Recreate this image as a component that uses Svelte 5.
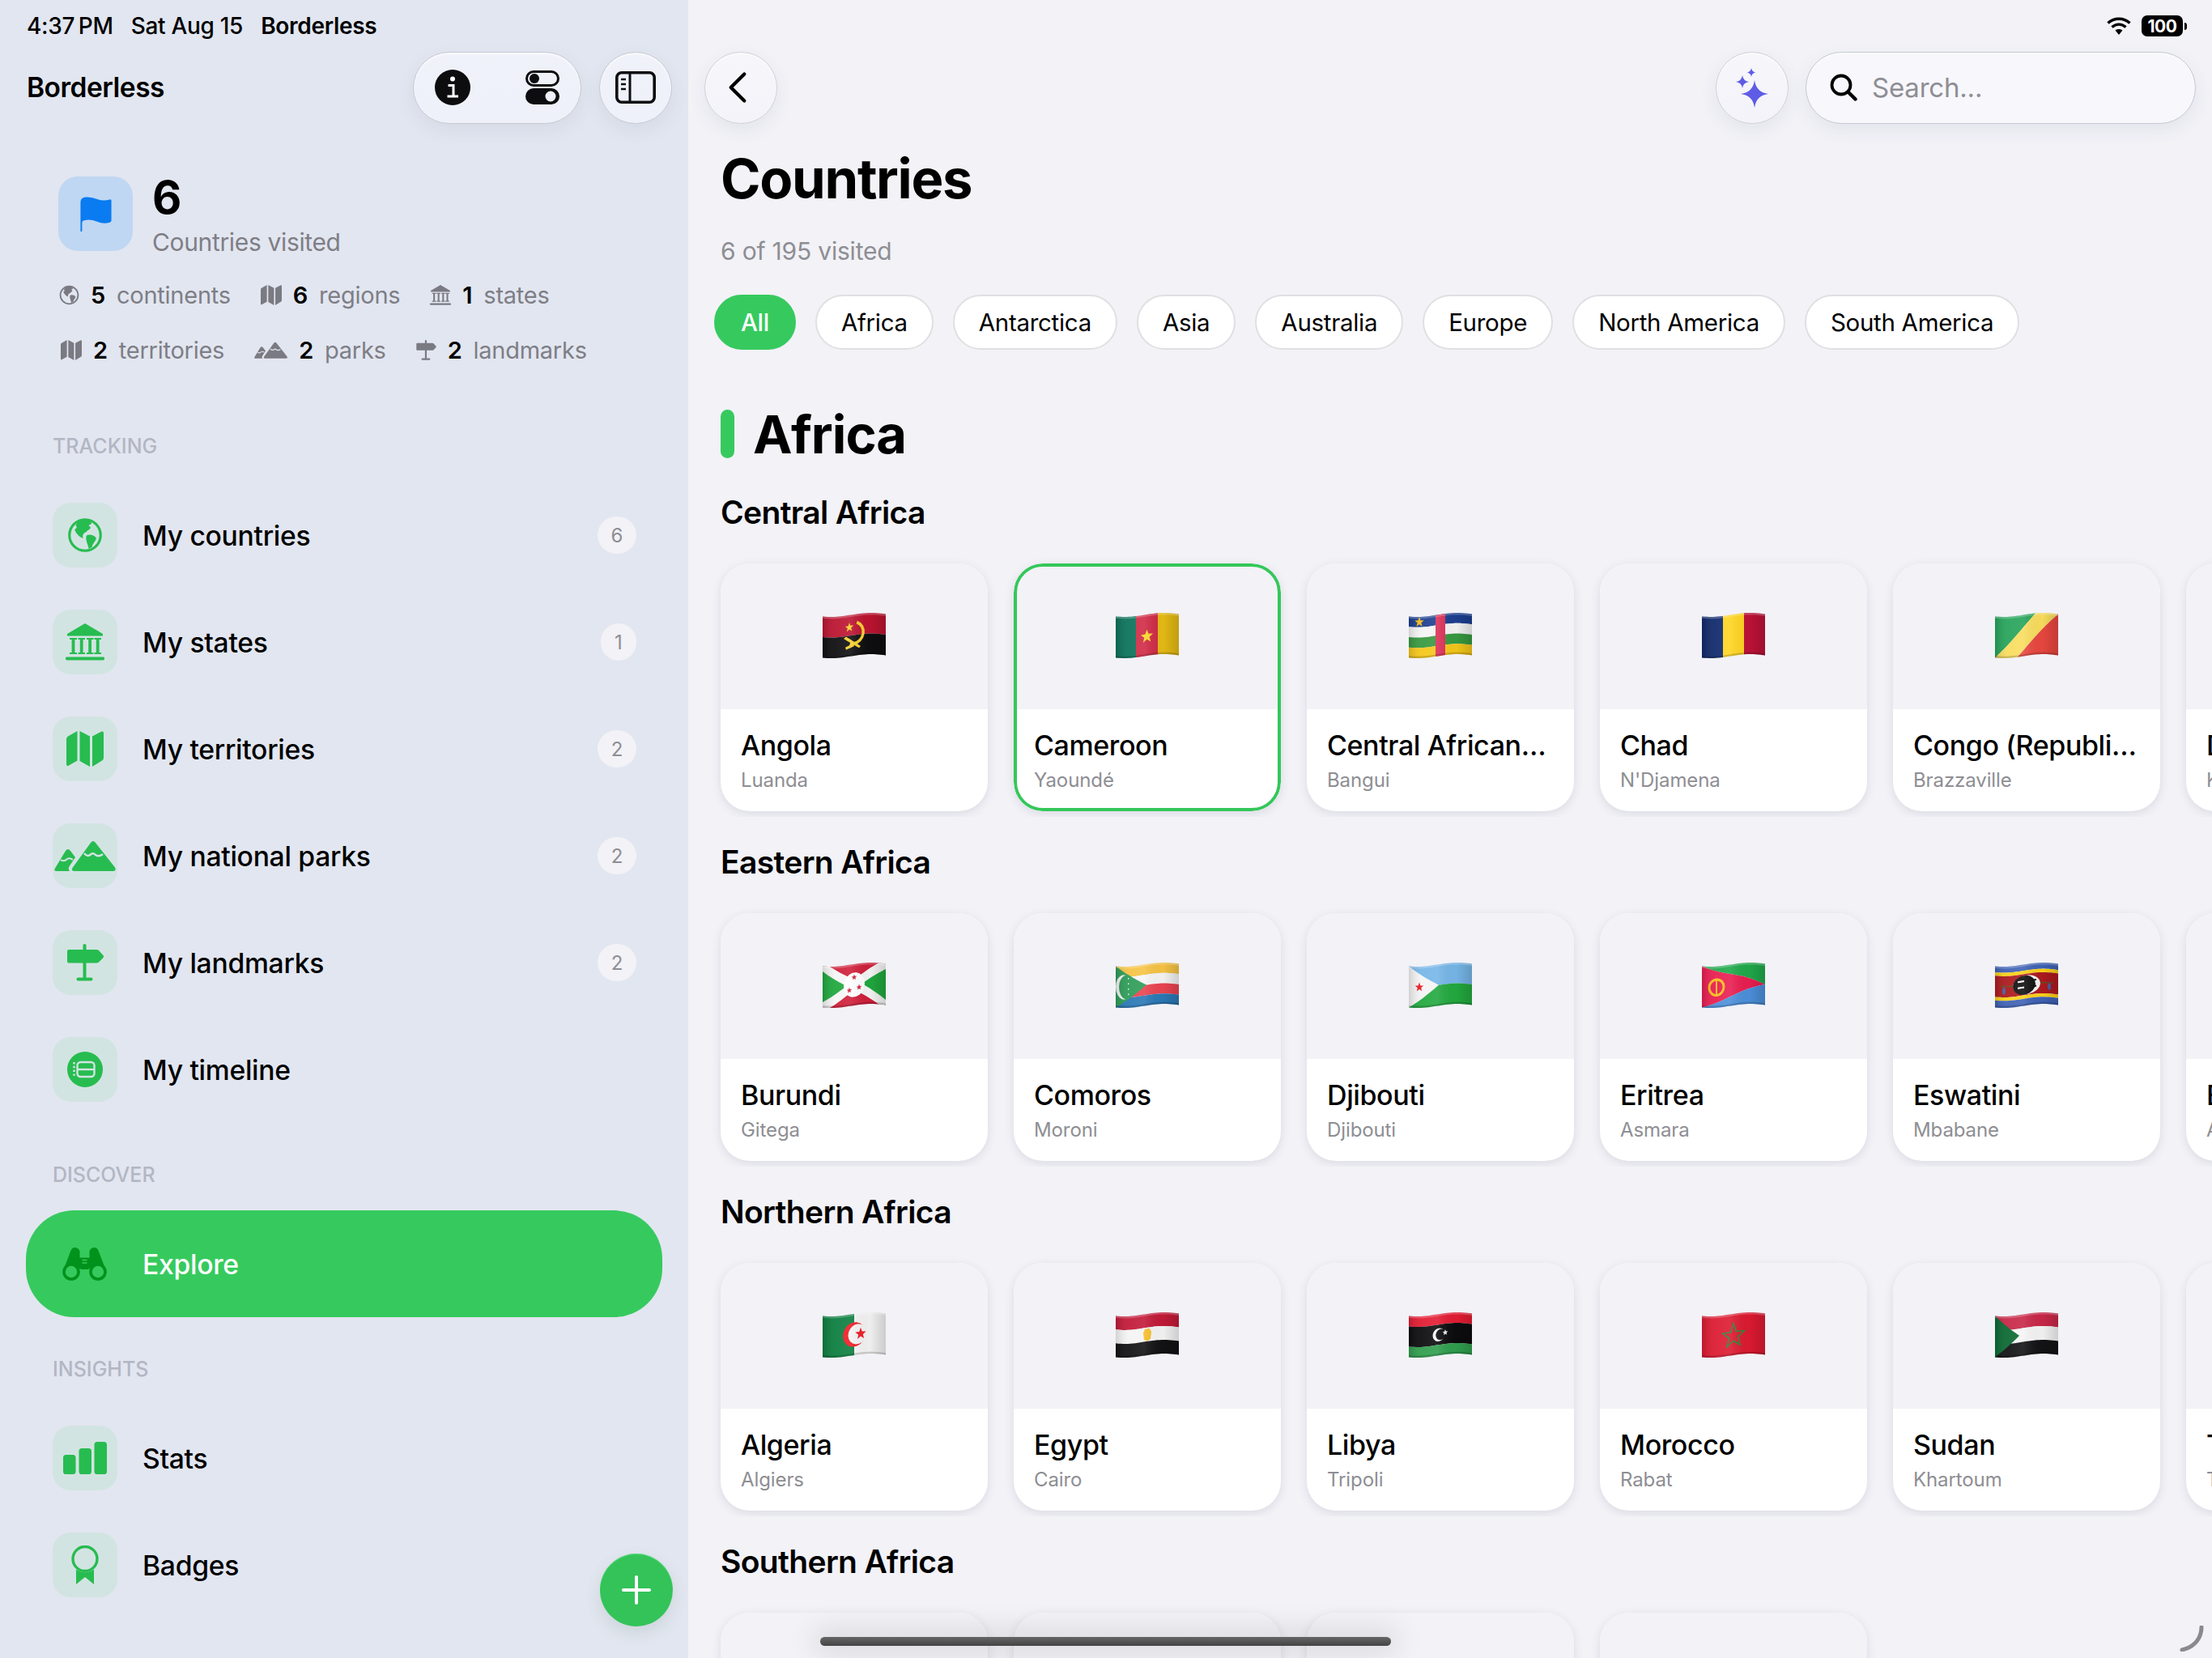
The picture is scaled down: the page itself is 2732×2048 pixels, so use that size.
<script>
  const H = 47;
  const SY = 51 / 47;
  const off = (x) => 2.5 + 2.5 * Math.cos(2 * Math.PI * 0.8 * (x / 78 - 0.14));
  function warp(pts) {
    let d = '';
    for (let i = 0; i < pts.length; i++) {
      const [x0, y0] = pts[i];
      const [x1, y1] = pts[(i + 1) % pts.length];
      const n = Math.max(1, Math.ceil(Math.hypot(x1 - x0, y1 - y0) / 3));
      for (let k = 0; k < n; k++) {
        const x = x0 + ((x1 - x0) * k) / n;
        const y = y0 + ((y1 - y0) * k) / n;
        d += (d ? 'L' : 'M') + x.toFixed(2) + ' ' + (y * SY + off(x)).toFixed(2);
      }
    }
    return d + 'Z';
  }
  const rect = (x, y, w, h) => [[x, y], [x + w, y], [x + w, y + h], [x, y + h]];
  const circ = (cx, cy, r, ry = r, a0 = 0, a1 = 360) => {
    const p = [];
    for (let a = a0; a <= a1; a += 20) p.push([cx + r * Math.cos((a * Math.PI) / 180), cy + ry * Math.sin((a * Math.PI) / 180)]);
    return p;
  };
  const star = (cx, cy, R, r = R * 0.42) => {
    const p = [];
    for (let i = 0; i < 10; i++) {
      const a = -Math.PI / 2 + (i * Math.PI) / 5;
      const q = i % 2 ? r : R;
      p.push([cx + q * Math.cos(a), cy + q * Math.sin(a)]);
    }
    return p;
  };
  const bands = (cols, stops) => cols.map((c, i) => [c, rect(0, stops[i], 78, stops[i + 1] - stops[i])]);
  const vbands = (cols, stops) => cols.map((c, i) => [c, rect(stops[i], 0, stops[i + 1] - stops[i], H)]);
  const ring = (cx, cy, R, r, a0, a1) => [...circ(cx, cy, R, R, a0, a1), ...circ(cx, cy, r, r, a0, a1).reverse()];

  const art = {
    angola: [
      ...bands(['#bb1430', '#0e0e10'], [0, 23.5, H]),
      ['#f7cf2e', ring(38, 21, 14, 10.5, -70, 110)],
      ['#f7cf2e', star(33, 14, 5.5)],
      ['#f7cf2e', [[26, 26], [29, 24], [47, 37], [45, 39]]],
      ['#f7cf2e', [[28, 36], [38, 33], [39, 36], [29, 39]]]
    ],
    cameroon: [...vbands(['#0b735a', '#d02a45', '#e6bb15'], [0, 25, 52, 78]), ['#fbd92c', star(38.5, 25, 8)]],
    car: [
      ...bands(['#1c3f8f', '#f4f4f4', '#37993f', '#f5c71a'], [0, 11.75, 23.5, 35.25, H]),
      ['#dc3058', rect(33, 0, 12, H)],
      ['#f5b91a', star(13, 6, 6)]
    ],
    chad: vbands(['#10296b', '#fed420', '#bd1238'], [0, 26, 52, 78]),
    congo: [
      ['#27a45b', [[0, 0], [50, 0], [0, 47]]],
      ['#f9dd5e', [[50, 0], [78, 0], [28, 47], [0, 47]]],
      ['#e8473f', [[78, 0], [78, 47], [28, 47]]]
    ],
    burundi: [
      ['#cf1f3a', rect(0, 0, 78, H)],
      ['#20a83e', [[0, 0], [39, 23.5], [0, 47]]],
      ['#20a83e', [[78, 0], [39, 23.5], [78, 47]]],
      ['#f5f5f5', [[0, 0], [9, 0], [78, 41], [78, 47], [69, 47], [0, 6]]],
      ['#f5f5f5', [[69, 0], [78, 0], [78, 6], [9, 47], [0, 47], [0, 41]]],
      ['#ffffff', circ(39, 23.5, 13, 14)],
      ['#cf1f3a', star(39, 15, 3.5)],
      ['#cf1f3a', star(33, 29, 3.5)],
      ['#cf1f3a', star(45, 27, 3.5)]
    ],
    comoros: [
      ...bands(['#f6c344', '#f5f5f5', '#ea4450', '#2a78b5'], [0, 11.75, 23.5, 35.25, H]),
      ['#2e9d58', [[0, 0], [38, 23.5], [0, 47]]],
      ['#f5f5f5', circ(10, 23.5, 10, 14)],
      ['#2e9d58', circ(14, 23.5, 10, 14)],
      ['#f5f5f5', rect(15, 13, 1.4, 1.4)],
      ['#f5f5f5', rect(15, 19, 1.4, 1.4)],
      ['#f5f5f5', rect(15, 25, 1.4, 1.4)],
      ['#f5f5f5', rect(15, 31, 1.4, 1.4)]
    ],
    djibouti: [
      ...bands(['#76b6e8', '#22a93f'], [0, 23.5, H]),
      ['#f4f4f4', [[0, 0], [37, 23.5], [0, 47]]],
      ['#ea1c24', star(13, 23.5, 5.5)]
    ],
    eritrea: [
      ['#1fa84a', [[0, 0], [78, 0], [78, 23.5]]],
      ['#e91e50', [[0, 0], [78, 23.5], [0, 47]]],
      ['#4b8fda', [[0, 47], [78, 23.5], [78, 47]]],
      ['#f5bb1e', ring(18, 24, 10.5, 7.5, 0, 360)],
      ['#f5bb1e', rect(17, 14, 2, 20)]
    ],
    eswatini: [
      ...bands(['#3f62b5', '#fbd117', '#ad1a1e', '#fbd117', '#3f62b5'], [0, 7, 11, 35, 39, H]),
      ['#6e4a22', rect(6, 22, 66, 1.4)],
      ['#4a5fa8', circ(11, 28, 2, 4)],
      ['#4a5fa8', circ(67, 27, 2, 4)],
      ['#f5f5f5', circ(39, 23.5, 17, 11)],
      ['#111111', circ(36, 23.5, 14, 11)],
      ['#f5f5f5', rect(28, 18, 8, 2)],
      ['#f5f5f5', rect(28, 25, 8, 2)],
      ['#111111', rect(44, 18, 7, 2)],
      ['#111111', rect(44, 25, 7, 2)]
    ],
    algeria: [
      ...vbands(['#0b7e3f', '#f3f3f3'], [0, 39, 78]),
      ['#ee1c25', circ(39, 23.5, 14)],
      ['#f3f3f3', circ(43, 23.5, 11.5)],
      ['#ee1c25', star(47, 23.5, 7)]
    ],
    egypt: [
      ...bands(['#c21a38', '#f4f4f4', '#121214'], [0, 15.6, 31.3, H]),
      ['#f7be2c', [[36, 17], [42, 17], [44, 21], [43, 29], [39, 31], [35, 29], [34, 21]]]
    ],
    libya: [
      ...bands(['#e31c32', '#0c0c0e', '#2f9e4d'], [0, 12, 35, H]),
      ['#f5f5f5', circ(37, 23.5, 7.5)],
      ['#0c0c0e', circ(39.5, 23.5, 6.2)],
      ['#f5f5f5', star(45, 22, 3.6)]
    ],
    morocco: [
      ['#dc1a30', rect(0, 0, 78, H)],
      ['#0f9a36', star(39, 25, 16, 6.5)],
      ['#dc1a30', star(39, 25, 12.5, 4.8)]
    ],
    sudan: [
      ...bands(['#c82848', '#f4f4f4', '#131315'], [0, 15.6, 31.3, H]),
      ['#0b6a33', [[0, 0], [30, 23.5], [0, 47]]]
    ]
  };
  const flags = Object.fromEntries(
    Object.entries(art).map(([k, v]) => [k, v.map(([c, p]) => ({ c, d: warp(p) }))])
  );
  const whole = warp(rect(0, 0, 78, H));
  const topEdge = warp(rect(0, 0, 78, 2.2));
  const botEdge = warp(rect(0, H - 2.2, 78, 2.2));

  const sections = [
    { title: 'Central Africa', items: [
      ['angola', 'Angola', 'Luanda'],
      ['cameroon', 'Cameroon', 'Yaoundé', true],
      ['car', 'Central African Republic', 'Bangui'],
      ['chad', 'Chad', "N'Djamena"],
      ['congo', 'Congo (Republic of the)', 'Brazzaville'],
      [null, 'DR Congo', 'Kinshasa']
    ]},
    { title: 'Eastern Africa', items: [
      ['burundi', 'Burundi', 'Gitega'],
      ['comoros', 'Comoros', 'Moroni'],
      ['djibouti', 'Djibouti', 'Djibouti'],
      ['eritrea', 'Eritrea', 'Asmara'],
      ['eswatini', 'Eswatini', 'Mbabane'],
      [null, 'Ethiopia', 'Addis Ababa']
    ]},
    { title: 'Northern Africa', items: [
      ['algeria', 'Algeria', 'Algiers'],
      ['egypt', 'Egypt', 'Cairo'],
      ['libya', 'Libya', 'Tripoli'],
      ['morocco', 'Morocco', 'Rabat'],
      ['sudan', 'Sudan', 'Khartoum'],
      [null, 'Tunisia', 'Tunis']
    ]},
    { title: 'Southern Africa', items: [
      [null, 'Botswana', 'Gaborone'],
      [null, 'Lesotho', 'Maseru'],
      [null, 'Namibia', 'Windhoek'],
      [null, 'South Africa', 'Pretoria']
    ]}
  ];
  const chips = ['All', 'Africa', 'Antarctica', 'Asia', 'Australia', 'Europe', 'North America', 'South America'];
  const tracking = [
    ['globe', 'My countries', 6],
    ['bank', 'My states', 1],
    ['map', 'My territories', 2],
    ['mountains', 'My national parks', 2],
    ['sign', 'My landmarks', 2],
    ['timeline', 'My timeline', null]
  ];
  const row1 = [['globe', 5, 'continents'], ['map', 6, 'regions'], ['bank', 1, 'states']];
  const row2 = [['map', 2, 'territories'], ['mountains', 2, 'parks'], ['sign', 2, 'landmarks']];
</script>

{#snippet icon(name)}
  {#if name === 'globe'}
    <svg class="ic globe" viewBox="0 0 48 48">
      <circle cx="24" cy="24" r="21" fill="none" stroke="currentColor" stroke-width="3.4" />
      <path fill="currentColor" d="M14 6.5C19 3.6 26 3 31 4.6L33 8.5 29 11 31.5 13.5C31 17 27 16.5 26 19.5 22 20.5 20 24 21.5 28 17 27 12 22 10 16.5L13 14 11.5 10.5Z" />
      <path fill="currentColor" d="M26 24.5C30 22 36 24 39 27.5 39 32 34 35 33.5 40L29 42.5C28 36 24 30 26 24.5Z" />
    </svg>
  {:else if name === 'bank'}
    <svg class="ic bank" viewBox="0 0 48 46">
      <path fill="currentColor" d="M24 0 46 13V15.5H2V13Z" />
      <path fill="currentColor" d="M5 18H14V20H11.4V36H14V38H5V36H7.6V20H5ZM15.5 18H24V20H21.6V36H24V38H15.5V36H17.8V20H15.5ZM26 18H34.5V20H32V36H34.5V38H26V36H28.2V20H26ZM35.5 18H44V20H41.6V36H44V38H35.5V36H37.8V20H35.5Z" />
      <rect x="0" y="41.5" width="48" height="4" rx="1.4" fill="currentColor" />
    </svg>
  {:else if name === 'map'}
    <svg class="ic map" viewBox="0 0 46 44">
      <path fill="currentColor" d="M0 10Q0 7.5 2 6.5L13.5 0V36.500L3 42.500Q0 44 0 41Z" />
      <path fill="currentColor" d="M16.500 0 29 6.500V44L16.500 37Z" />
      <path fill="currentColor" d="M32 6.500 43 .8Q46-.5 46 2.500V33Q46 35.500 44 36.500L32 44Z" />
    </svg>
  {:else if name === 'mountains'}
    <svg class="ic mountains" viewBox="0 0 76 38">
      <path fill="currentColor" d="M3 38Q-1 38 1 34.500L14 13Q17 9 20 13L26 21 20 30Q16 35 19 38Z" />
      <path fill="currentColor" d="M25 38Q20.500 38 22.500 34L45 3Q48-1 51 3L75 33.500Q77 38 73 38Z" />
      <path fill="none" stroke="var(--cut)" stroke-width="2.4" d="M37 16Q41 21 45 17.500 48 15 51 18 55 21 60 17" />
      <path fill="none" stroke="var(--cut)" stroke-width="2" d="M8 24Q12 27 16 23 19 21 23 24" />
    </svg>
  {:else if name === 'sign'}
    <svg class="ic sign" viewBox="0 0 45 46">
      <path fill="currentColor" d="M0 9Q0 7 2 7H19.500V1.500Q19.500 0 21.500 0 23.500 0 23.500 1.500V7H36Q38 7 39 8L44.500 14Q45.500 15.500 44.500 17L39 22.500Q38 23.500 36 23.500H23.500V41.500H29.500Q31.500 41.500 31.500 43.500 31.500 45.500 29.500 45.500H13.500Q11.500 45.500 11.500 43.500 11.500 41.500 13.500 41.500H19.500V23.500H2Q0 23.500 0 21.500Z" />
    </svg>
  {:else if name === 'timeline'}
    <svg class="ic timeline" viewBox="0 0 44 44">
      <circle cx="22" cy="22" r="22" fill="currentColor" />
      <rect x="12.500" y="13" width="21" height="18" rx="4" fill="none" stroke="var(--cut)" stroke-width="2.4" />
      <path stroke="var(--cut)" stroke-width="2.400" d="M12.500 22H33.500" />
      <path stroke="var(--cut)" stroke-width="2.400" stroke-dasharray="2.400 2.400" d="M8.500 13V31" />
    </svg>
  {:else if name === 'chart'}
    <svg class="ic chart" viewBox="0 0 54 40">
      <rect x="0" y="16" width="15.500" height="24" rx="3.600" fill="currentColor" />
      <rect x="19.500" y="8" width="15.500" height="32" rx="3.600" fill="currentColor" />
      <rect x="38.500" y="0" width="15.500" height="40" rx="3.600" fill="currentColor" />
    </svg>
  {:else if name === 'rosette'}
    <svg class="ic rosette" viewBox="0 0 34 48">
      <ellipse cx="17" cy="16.500" rx="15" ry="15" fill="none" stroke="currentColor" stroke-width="3.400" />
      <path fill="currentColor" d="M6 29.500Q17 37 28 29.500V48L17 39 6 48Z" />
    </svg>
  {:else if name === 'binoculars'}
    <svg class="ic binoculars" viewBox="0 0 55 41">
      <path fill="currentColor" d="M2 26 10 5Q11.500 0 15.500 0 20 0 21.500 4.500V12.500H33.500V4.500Q35 0 39.500 0 43.500 0 45 5L53 26 44 21 36 25 31 27H24L19 25 11 21Z" />
      <circle cx="11" cy="30" r="9" fill="#36ca5e" stroke="currentColor" stroke-width="3.600" />
      <circle cx="44" cy="30" r="9" fill="#36ca5e" stroke="currentColor" stroke-width="3.600" />
      <path d="M24.500 15.500H30.500M24.500 19H30.500" stroke="#36ca5e" stroke-width="1.500" />
    </svg>
  {/if}
{/snippet}

{#snippet flag(key)}
  <svg class="flag" viewBox="0 0 78 56" aria-hidden="true">
    {#each flags[key] as s}<path d={s.d} fill={s.c} />{/each}
    <path d={whole} fill="url(#flagShade)" />
    <path d={topEdge} fill="#fff" opacity=".22" />
    <path d={botEdge} fill="#000" opacity=".16" />
  </svg>
{/snippet}

{#snippet stat(s)}
  <div class="stat">
    <span class="stat-ic">{@render icon(s[0])}</span>
    <b>{s[1]}</b>
    <span>{s[2]}</span>
  </div>
{/snippet}

{#snippet navrow(n)}
  <div class="nav-row">
    <div class="tile">{@render icon(n[0])}</div>
    <div class="nav-label">{n[1]}</div>
    {#if n[2] !== null && n[2] !== undefined}<div class="count" class:narrow={n[2] === 1}>{n[2]}</div>{/if}
  </div>
{/snippet}

<svg class="defs" width="0" height="0" aria-hidden="true">
  <defs>
    <linearGradient id="flagShade" x1="0" x2="1" y1="0" y2="0">
      <stop offset="0" stop-color="#000" stop-opacity=".14" />
      <stop offset=".2" stop-color="#fff" stop-opacity=".06" />
      <stop offset=".45" stop-color="#fff" stop-opacity=".1" />
      <stop offset=".75" stop-color="#000" stop-opacity=".02" />
      <stop offset="1" stop-color="#000" stop-opacity=".16" />
    </linearGradient>
  </defs>
</svg>

<div class="app">
  <aside class="side">
    <div class="status">
      <span>4:37&#8201;PM</span><span>Sat Aug 15</span><b>Borderless</b>
    </div>

    <header class="side-head">
      <div class="app-name">Borderless</div>
      <div class="glass group">
        <svg class="info" viewBox="0 0 44 44">
          <circle cx="22" cy="22" r="22" fill="#0d0d10" />
          <circle cx="22" cy="11.500" r="3" fill="#fff" />
          <path fill="none" stroke="#fff" stroke-width="3" d="M16.500 19.500H23V33M15.500 33H29" />
        </svg>
        <svg class="toggles" viewBox="0 0 42 42">
          <rect x="1.500" y="1.500" width="39" height="17" rx="8.500" fill="none" stroke="#0d0d10" stroke-width="3" />
          <circle cx="11" cy="10" r="6" fill="#0d0d10" />
          <rect x="0" y="22" width="42" height="20" rx="10" fill="#0d0d10" />
          <circle cx="31" cy="32" r="6.500" fill="#eef1f9" />
        </svg>
      </div>
      <div class="glass round">
        <svg class="panel" viewBox="0 0 50 40">
          <rect x="1.800" y="1.800" width="46.400" height="36.400" rx="6" fill="none" stroke="#0d0d10" stroke-width="3.600" />
          <path stroke="#0d0d10" stroke-width="3" d="M18 2V38" />
          <path stroke="#0d0d10" stroke-width="2.400" d="M7 10H13M7 16H13M7 22H13" />
        </svg>
      </div>
    </header>

    <section class="summary">
      <div class="sum-top">
        <div class="flag-tile">
          <svg viewBox="0 0 40 44">
            <path fill="#0a7bf0" d="M1 44V7Q1 1 8 .5 15 0 22 3 30 6 38 3.500 40 3 40 5V30Q40 32 38 32.500 30 35 22 31.500 13 28 6 30 3 30.500 3 33V43Q3 44 2 44Z" />
          </svg>
        </div>
        <div class="sum-text">
          <div class="big">6</div>
          <div class="cap">Countries visited</div>
        </div>
      </div>
      <div class="stats first">{#each row1 as s}{@render stat(s)}{/each}</div>
      <div class="stats second">{#each row2 as s}{@render stat(s)}{/each}</div>
    </section>

    <div class="label tracking">TRACKING</div>
    <nav class="nav">{#each tracking as n}{@render navrow(n)}{/each}</nav>

    <div class="label">DISCOVER</div>
    <div class="explore">
      <div class="explore-ic">{@render icon('binoculars')}</div>
      <div class="explore-label">Explore</div>
    </div>

    <div class="label">INSIGHTS</div>
    <nav class="nav">
      {@render navrow(['chart', 'Stats', null])}
      {@render navrow(['rosette', 'Badges', null])}
    </nav>

    <button class="fab" aria-label="Add">
      <svg viewBox="0 0 36 36"><path d="M18 2V34M2 18H34" stroke="#fff" stroke-width="4" stroke-linecap="round" /></svg>
    </button>
  </aside>

  <main class="main">
    <div class="status right">
      <svg class="wifi" viewBox="0 0 30 22">
        <path fill="none" stroke="#000" stroke-width="3.400" d="M1.500 7.500C9 .5 21 .5 28.500 7.500M6.500 12.500C11.500 8 18.500 8 23.500 12.500" />
        <path fill="#000" d="M10.500 16.500C13 14.500 17 14.500 19.500 16.500L15 22Z" />
      </svg>
      <div class="batt"><span>100</span></div><i class="nub"></i>
    </div>

    <div class="toolbar">
      <div class="glass round light">
        <svg class="chev" viewBox="0 0 26 42"><path d="M22 3 4 21 22 39" fill="none" stroke="#000" stroke-width="4.600" stroke-linecap="round" stroke-linejoin="round" /></svg>
      </div>
      <div class="spacer"></div>
      <div class="glass round light spark">
        <svg viewBox="0 0 40 49" class="sparkles">
          <path fill="#5e5ce6" d="M23 15Q25 30 40 32 25 34 23 49 21 34 6 32 21 30 23 15Z" />
          <path fill="#5e5ce6" d="M8 9Q9 16 16 17 9 18 8 25 7 18 0 17 7 16 8 9Z" />
          <path fill="#5e5ce6" d="M19 0Q19.700 4.800 24.500 5.500 19.700 6.200 19 11 18.300 6.200 13.500 5.500 18.300 4.800 19 0Z" />
        </svg>
      </div>
      <div class="glass search">
        <svg viewBox="0 0 34 34" class="mag">
          <circle cx="14" cy="14" r="11.500" fill="none" stroke="#000" stroke-width="3.800" />
          <path d="M23 23 31.500 31.500" stroke="#000" stroke-width="4.400" stroke-linecap="round" />
        </svg>
        <span>Search...</span>
      </div>
    </div>

    <h1>Countries</h1>
    <p class="sub">6 of 195 visited</p>

    <div class="chips">
      {#each chips as c, i}<div class="chip" class:on={i === 0}>{c}</div>{/each}
    </div>

    <h2><i></i>Africa</h2>

    {#each sections as s}
      <section class="region">
        <h3>{s.title}</h3>
        <div class="cards">
          {#each s.items as it}
            <article class="card" class:sel={it[3]}>
              <div class="thumb">{#if it[0]}{@render flag(it[0])}{/if}</div>
              <div class="info-box">
                <div class="name">{it[1]}</div>
                <div class="capital">{it[2]}</div>
              </div>
            </article>
          {/each}
        </div>
      </section>
    {/each}
  </main>

  <div class="home"></div>
  <svg class="grip" viewBox="0 0 30 32"><path d="M27 2C27 14 20 26 3 30" fill="none" stroke="#8a8a8e" stroke-width="5" stroke-linecap="round" /></svg>
</div>

<style>
  :global(body) { margin: 0; background: #f2f2f7; }
  .defs { position: absolute; }
  .app {
    position: relative;
    display: flex;
    width: 2732px;
    height: 2048px;
    overflow: hidden;
    font-family: Inter, "Liberation Sans", sans-serif;
    color: #000;
    background: #f2f2f7;
  }

  .status {
    height: 64px;
    display: flex;
    align-items: center;
    gap: 22px;
    font-size: 28px;
    font-weight: 500;
    letter-spacing: -0.3px;
    padding-left: 33px;
    box-sizing: border-box;
  }
  .status b { font-weight: 600; }
  .status.right { justify-content: flex-end; padding: 0 31px 0 0; gap: 0; }
  .wifi { width: 30px; height: 22px; margin-right: 13px; }
  .batt {
    width: 51px; height: 26px; background: #000; border-radius: 7px;
    display: flex; align-items: center; justify-content: center;
    color: #fff; font-size: 21px; font-weight: 700; letter-spacing: -0.4px;
  }
  .nub { width: 3px; height: 9px; background: #000; border-radius: 0 3px 3px 0; margin-left: 2px; }

  .side {
    position: relative;
    flex: none;
    width: 850px;
    height: 2048px;
    box-sizing: border-box;
    background: #e2e6f0;
    --cut: #d2e4e2;
  }
  .side-head { height: 88px; display: flex; align-items: center; padding: 0 20px 0 33px; }
  .app-name { font-size: 33.500px; font-weight: 600; letter-spacing: -0.5px; flex: 1; }
  .glass {
    box-sizing: border-box;
    height: 89px;
    border: 1.5px solid #c6c9d2;
    border-radius: 45px;
    background: linear-gradient(#f0f2fa, #eef1f9);
    box-shadow: 0 8px 22px rgba(70, 80, 110, 0.08), inset 0 2px 3px rgba(255, 255, 255, 0.7);
    display: flex;
    align-items: center;
  }
  .group { width: 208px; justify-content: space-between; padding: 0 26px 0 26px; }
  .round { width: 90px; justify-content: center; margin-left: 22px; }
  .info { width: 44px; height: 44px; }
  .toggles { width: 42px; height: 42px; }
  .panel { width: 50px; height: 40px; }

  .summary { padding: 66px 0 0 72px; }
  .sum-top { display: flex; gap: 24px; height: 92px; }
  .flag-tile {
    width: 92px; height: 92px; border-radius: 24px; background: #bfd7f2;
    display: flex; align-items: center; justify-content: center;
  }
  .flag-tile svg { width: 40px; height: 43px; }
  .big { font-size: 56px; font-weight: 700; line-height: 52px; height: 62px; }
  .cap { font-size: 30px; color: #7e7e86; line-height: 38px; letter-spacing: -0.35px; }
  .stats { display: flex; gap: 37px; height: 40px; align-items: center; }
  .stats.first { margin-top: 34px; }
  .stats.second { margin-top: 28px; }
  .stat { display: flex; align-items: center; gap: 14px; font-size: 29px; color: #7e7e86; letter-spacing: -0.25px; }
  .stat b { color: #000; font-weight: 600; }
  .stat-ic { display: flex; color: #7a7a82; --cut: #e2e6f0; }
  .stat-ic .globe { width: 25px; height: 25px; margin-left: 1px; }
  .stat-ic .map { width: 26px; height: 25px; }
  .stats.second .stat:first-child .stat-ic { margin-left: 3px; }
  .stat-ic .bank { width: 26px; height: 25px; }
  .stat-ic .mountains { width: 41px; height: 21px; }
  .stat-ic .sign { width: 25px; height: 25px; }

  .label {
    height: 30px; line-height: 30px; margin: 49px 0 29px 65px;
    font-size: 25px; font-weight: 500; color: #b3b6c4;
  }
  .label.tracking { margin-top: 84px; }
  .nav-row { height: 132px; display: flex; align-items: center; padding: 0 64px 0 65px; }
  .tile {
    flex: none; width: 80px; height: 80px; border-radius: 22px; background: #d2e4e2;
    color: #27bc50; display: flex; align-items: center; justify-content: center;
  }
  .tile .globe { width: 44px; height: 44px; }
  .tile .bank { width: 48px; height: 46px; }
  .tile .map { width: 46px; height: 44px; }
  .tile .mountains { width: 76px; height: 38px; flex: none; }
  .tile .sign { width: 45px; height: 46px; }
  .tile .timeline { width: 44px; height: 44px; }
  .tile .chart { width: 54px; height: 40px; }
  .tile .rosette { width: 34px; height: 48px; }
  .nav-label { flex: 1; margin-left: 31px; font-size: 33.700px; font-weight: 500; letter-spacing: -0.3px; }
  .count {
    width: 48px; height: 46px; border-radius: 23px; background: #f2f2f7; color: #8e8e93;
    font-size: 24px; display: flex; align-items: center; justify-content: center;
  }
  .count.narrow { width: 44px; }

  .explore {
    margin: 0 32px; height: 132px; border-radius: 60px; background: #36ca5e;
    display: flex; align-items: center; padding-left: 45px;
  }
  .explore-ic { color: #00921b; display: flex; }
  .binoculars { width: 55px; height: 41px; }
  .explore-label { margin-left: 44px; font-size: 33.700px; font-weight: 500; color: #fff; letter-spacing: -0.3px; }

  .fab {
    position: absolute; left: 741px; top: 1919px; width: 90px; height: 90px;
    padding: 0; border: none; border-radius: 50%; background: #33c359;
    box-shadow: 0 8px 20px rgba(40, 90, 60, 0.12), inset 0 1px 1px rgba(120, 240, 150, 0.6);
    display: flex; align-items: center; justify-content: center;
  }
  .fab svg { width: 36px; height: 36px; }

  .main { flex: 1; min-width: 0; padding-left: 40px; overflow: hidden; }
  .main .status { padding-left: 0; }
  .toolbar { height: 88px; display: flex; align-items: center; margin-left: -20px; padding-right: 20px; }
  .toolbar .round { margin-left: 0; }
  .light { background: linear-gradient(#f6f6fb, #f3f3f9); border-color: #d0d0d6; }
  .spacer { flex: 1; }
  .chev { width: 24px; height: 40px; margin-right: 8px; }
  .sparkles { width: 40px; height: 49px; }
  .search {
    width: 482px; margin-left: 21px; padding-left: 29px; gap: 18px;
    background: #f7f7fc; font-size: 33px; color: #8e8e93; letter-spacing: -0.2px;
  }
  .mag { width: 34px; height: 34px; }

  h1 { margin: 0; padding-top: 35px; font-size: 67px; line-height: 68px; font-weight: 700; letter-spacing: -1.3px; height: 68px; }
  .sub { margin: 35px 0 0; height: 40px; line-height: 40px; font-size: 30px; letter-spacing: -0.2px; color: #8e8e93; }
  .chips { display: flex; gap: 24px; margin: 34px 0 0 -8px; }
  .chip {
    box-sizing: border-box; height: 68px; border-radius: 34px; padding: 0 30px;
    background: #fff; border: 2px solid #e0e0e3;
    font-size: 29.500px; line-height: 64px; letter-spacing: -0.3px;
  }
  .chip.on { background: #36ca5e; border-color: #36ca5e; color: #fff; font-weight: 500; padding: 0 31px; }

  h2 { margin: 74px 0 0; height: 60px; display: flex; align-items: center; gap: 23px; font-size: 65px; font-weight: 700; letter-spacing: -1px; }
  h2 i { width: 17px; height: 60px; border-radius: 9px; background: #36ca5e; }
  .region { margin-top: 37px; }
  .region + .region { margin-top: 33px; }
  h3 { margin: 0 0 33px; height: 60px; line-height: 60px; font-size: 39px; font-weight: 600; letter-spacing: -0.65px; }
  .cards {
    display: flex; gap: 32px; overflow: hidden;
    margin: -10px -200px -7px -40px; padding: 10px 200px 7px 40px;
  }
  .card {
    flex: none; position: relative; box-sizing: border-box;
    width: 330px; height: 306px; border-radius: 36px; overflow: hidden; background: #fff;
    box-shadow: 0 3px 12px rgba(60, 60, 90, 0.13);
  }
  .card.sel::after {
    content: ""; position: absolute; inset: 0; border: 4.5px solid #34c759; border-radius: 36px;
  }
  .thumb {
    height: 180px; background: #f2f2f7; display: flex; align-items: center; justify-content: center;
  }
  .flag { width: 78px; height: 56px; margin-top: -2px; }
  .info-box { padding: 25px 28px 0 25px; }
  .name {
    font-size: 34px; font-weight: 500; line-height: 40px; letter-spacing: -0.4px;
    white-space: nowrap; overflow: hidden; text-overflow: ellipsis;
  }
  .capital { font-size: 24px; line-height: 30px; color: #8e8e93; margin-top: 8px; letter-spacing: -0.1px; }

  .home {
    position: absolute; left: 1013px; top: 2022px; width: 705px; height: 11px; border-radius: 6px;
    background: linear-gradient(#666, #444);
    box-shadow: 0 0 34px 10px rgba(0, 0, 0, 0.1);
  }
  .grip { position: absolute; left: 2692px; top: 2008px; width: 30px; height: 32px; }
</style>
